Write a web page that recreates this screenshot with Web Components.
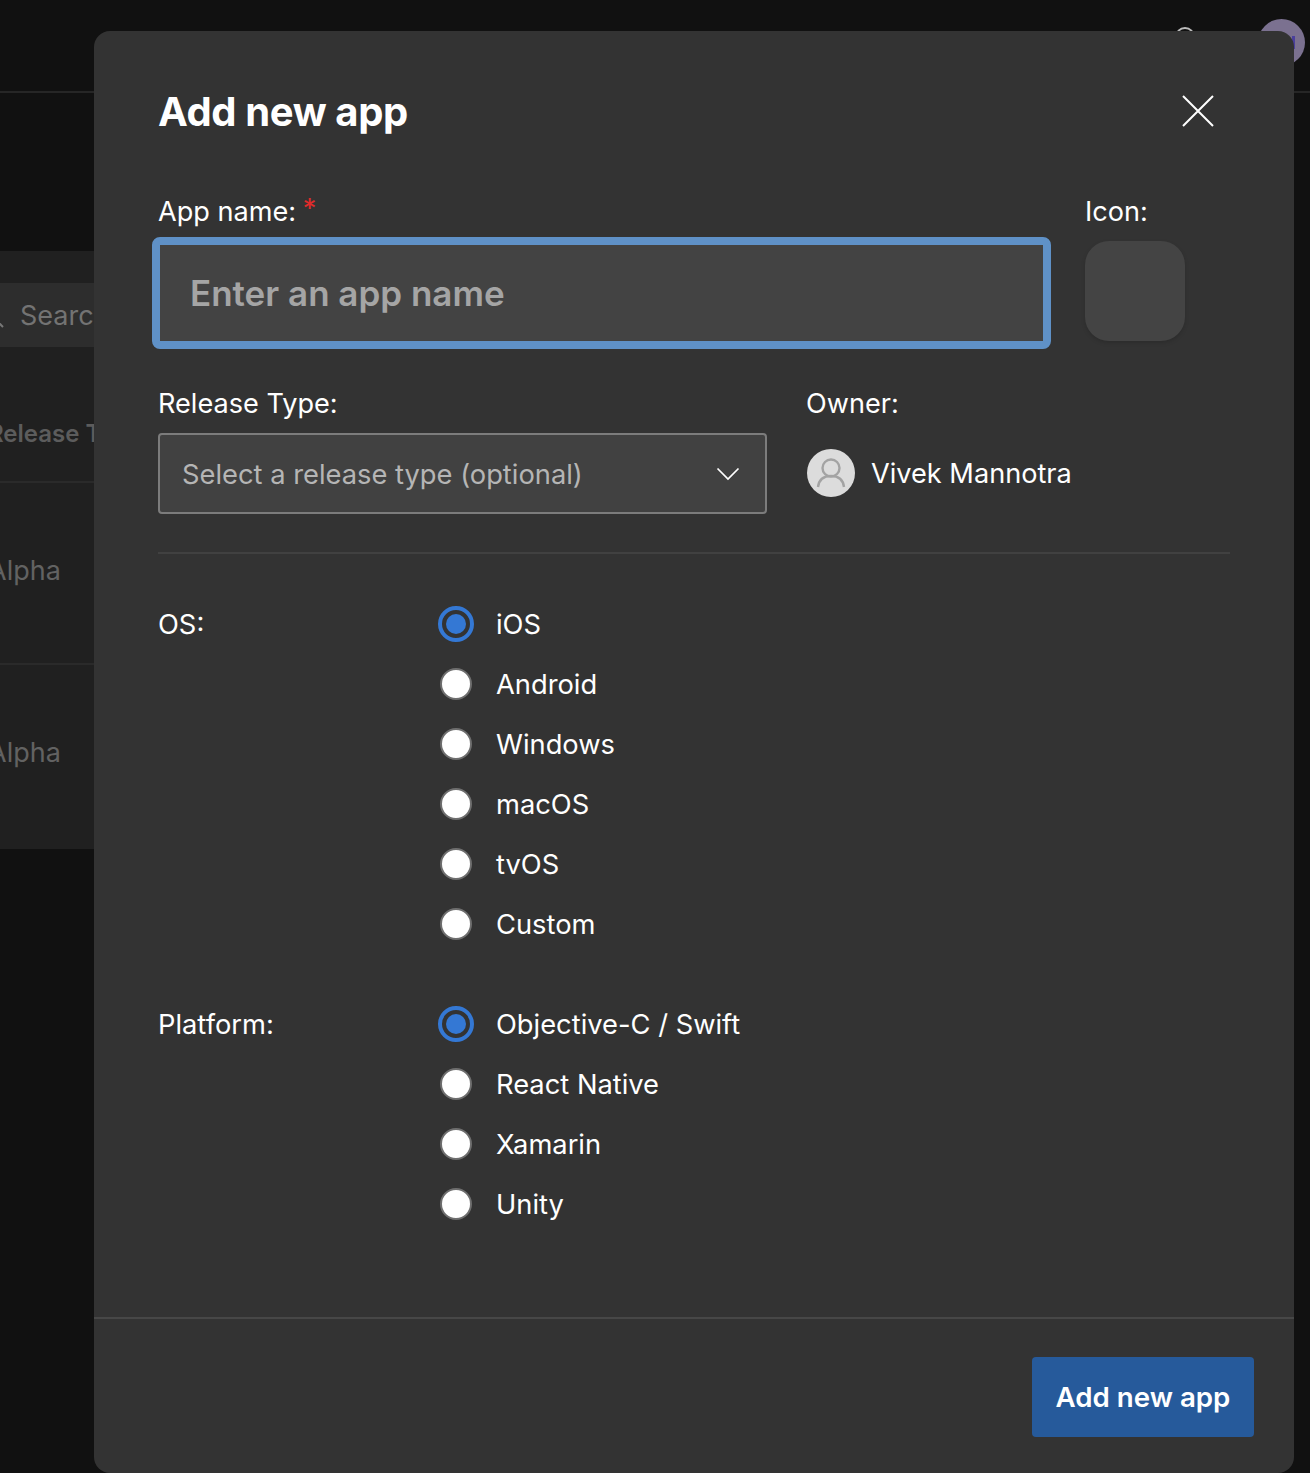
<!DOCTYPE html>
<html lang="en"><head><meta charset="utf-8"><title>Add new app</title>
<style>
html,body{margin:0;height:100%;background:#111;overflow:hidden}
body{font-family:Inter,"Liberation Sans",sans-serif}
</style></head><body>
<app-backdrop>
  <add-app-dialog></add-app-dialog>
</app-backdrop>
<script>
class AppBackdrop extends HTMLElement{constructor(){super();this.attachShadow({mode:'open'}).innerHTML=`
<style>
:host{display:block;position:relative;width:1310px;height:1473px;overflow:hidden;background:#111;color:#666;font:500 27px/32px Inter,sans-serif}
.top{height:91px;border-bottom:2px solid #262626;position:relative}
.top svg{position:absolute;left:1171px;top:23px}
.avatar{position:absolute;left:1258px;top:19px;width:47px;height:47px;border-radius:50%;background:#7b7190}
.avatar::after{content:"";position:absolute;left:34px;top:17px;width:3px;height:13px;background:#4a3f9c}
.panel{margin-top:158px;height:598px;background:#202020;display:flex;flex-direction:column;overflow:hidden;margin-right:16px;margin-left:-40px}
.search{margin-top:32px;height:64px;flex:none;box-sizing:border-box;padding:2px 0 0 60px;background:#2d2d2d;display:flex;align-items:center;position:relative;color:#737373;font-weight:400}
.search svg{position:absolute;left:19px;top:20px}
.head{height:136px;flex:none;border-bottom:2px solid #2a2a2a;box-sizing:border-box;padding:40px 0 0 28px;display:flex;align-items:center;font-size:24px;font-weight:600;color:#5c5c5c;white-space:nowrap}
.row{height:182px;flex:none;border-bottom:2px solid #2a2a2a;box-sizing:border-box;padding-left:28px;padding-top:72px;font-weight:400;color:#626262}
.row:last-child{border:0}
</style>
<div class="top">
 <svg width="28" height="28" viewBox="0 0 28 28" fill="none" stroke="#bbb" stroke-width="2"><circle cx="14" cy="14" r="9"/></svg>
 <div class="avatar"></div>
</div>
<div class="panel">
 <div class="search"><svg width="26" height="26" viewBox="0 0 26 26" fill="none" stroke="#777" stroke-width="2"><circle cx="10" cy="10" r="8"/><path d="M16 16l8 8"/></svg>Search</div>
 <div class="head">Release Type</div>
 <div class="row">Alpha</div>
 <div class="row">Alpha</div>
</div>
<slot></slot>`;}}
customElements.define('app-backdrop',AppBackdrop);

class RadioGroup extends HTMLElement{
 connectedCallback(){
  const items=(this.getAttribute('items')||'').split('|');
  const r=this.attachShadow({mode:'open'});
  r.innerHTML=`<style>
:host{display:grid;grid-template-columns:264px 1fr;color:#fff;font:400 27.3px/32px Inter,sans-serif}
.label{padding-top:15px}
.opts{display:flex;flex-direction:column;margin-left:16px}
.opt{height:60px;display:flex;align-items:center;gap:22px}
.opt span:last-child{padding-top:1px}
.r{width:36px;height:36px;box-sizing:border-box;border-radius:50%;display:flex;align-items:center;justify-content:center}
.off::before{content:"";width:32px;height:32px;box-sizing:border-box;border-radius:50%;background:#fff;border:2px solid #6e6e6e}
.on{border:4px solid #3478d4}
.on::before{content:"";width:20px;height:20px;border-radius:50%;background:#3478d4}
</style><div class="label">${this.getAttribute('label')}</div><div class="opts">${items.map((t,i)=>`<div class="opt"><span class="r ${i==0?'on':'off'}"></span><span>${t}</span></div>`).join('')}</div>`;
 }}
customElements.define('radio-group',RadioGroup);

class AddAppDialog extends HTMLElement{constructor(){super();this.attachShadow({mode:'open'}).innerHTML=`
<style>
:host{display:flex;flex-direction:column;position:absolute;left:94px;top:31px;width:1200px;height:1442px;box-sizing:border-box;background:#333;border-radius:16px;color:#fff;font:400 27.3px/32px Inter,sans-serif;overflow:hidden}
.body{flex:1;padding:0 64px}
.title{display:flex;justify-content:space-between;align-items:center;height:82px;margin-top:40px}
h1{margin:0;font:700 40px/48px Inter,sans-serif;letter-spacing:-.4px}
.x{margin:0 16px 2px 0;display:flex}
.row1{display:flex;margin-top:43px}
.f1{width:927px}
.lab{height:32px;line-height:32px;font-size:27.1px}
.own{margin-left:-1px}
.req{color:#e02b2b;vertical-align:3px;line-height:0;margin-left:-1px}
.input{margin:9px 0 0 -6px;width:899px;height:112px;box-sizing:border-box;border:8px solid #5f91c7;border-radius:8px;background:#434343;display:flex;align-items:center;padding-left:30px;font:600 35px/40px Inter,sans-serif;color:#a5a5a5}
.icon{width:100px;height:100px;border-radius:24px;background:#444;margin-top:13px;box-shadow:0 2px 4px rgba(0,0,0,.15)}
.row2{display:flex;margin-top:39px}
.f2{width:649px}
.select{margin-top:13px;width:609px;height:81px;box-sizing:border-box;border:2px solid #7c7c7c;border-radius:4px;background:#414141;display:flex;align-items:center;justify-content:space-between;padding:2px 25px 0 22px;color:#b5b5b5}
.select svg{margin:-2px 0 0 1px}
.owner{display:flex;align-items:center;gap:16px;margin-top:13px;height:80px;font-size:27.15px}
.owner>span:last-child{padding-top:2px}
.face{width:48px;height:48px;border-radius:50%;background:#dcdcdc;display:flex;align-items:center;justify-content:center}
hr{border:0;height:2px;background:#414141;margin:38px 0 0 0;width:1072px}
.grp1{margin-top:40px}
.grp2{margin-top:40px}
.foot{height:156px;flex:none;box-sizing:border-box;border-top:2px solid #474747;display:flex;justify-content:flex-end;align-items:flex-start;padding:38px 40px 0 0}
.btn{width:222px;height:80px;border-radius:4px;background:#265a9b;display:flex;align-items:center;justify-content:center;font:600 27.7px/32px Inter,sans-serif;color:#fff}
</style>
<div class="body">
 <div class="title"><h1>Add new app</h1><span class="x"><svg width="32" height="32" viewBox="0 0 32 32" fill="none" stroke="#fff" stroke-width="2"><path d="M1 1l30 30M31 1L1 31"/></svg></span></div>
 <div class="row1">
  <div class="f1"><div class="lab">App name: <span class="req">*</span></div><div class="input">Enter an app name</div></div>
  <div><div class="lab">Icon:</div><div class="icon"></div></div>
 </div>
 <div class="row2">
  <div class="f2"><div class="lab">Release Type:</div><div class="select"><span>Select a release type (optional)</span><svg width="24" height="14" viewBox="0 0 24 14" fill="none" stroke="#fff" stroke-width="1.7"><path d="M1.5 1.5l10.500 10.500L22.500 1.500"/></svg></div></div>
  <div><div class="lab own">Owner:</div><div class="owner"><span class="face"><svg width="48" height="48" viewBox="0 0 48 48" fill="none" stroke="#a3a3a3" stroke-width="2.4"><circle cx="24" cy="19" r="8.5"/><path d="M11 38c1-8 6-11 13-11s12 3 13 11"/></svg></span><span>Vivek Mannotra</span></div></div>
 </div>
 <hr>
 <radio-group class="grp1" label="OS:" items="iOS|Android|Windows|macOS|tvOS|Custom"></radio-group>
 <radio-group class="grp2" label="Platform:" items="Objective-C / Swift|React Native|Xamarin|Unity"></radio-group>
</div>
<div class="foot"><div class="btn">Add new app</div></div>`;}}
customElements.define('add-app-dialog',AddAppDialog);
</script>
</body></html>
